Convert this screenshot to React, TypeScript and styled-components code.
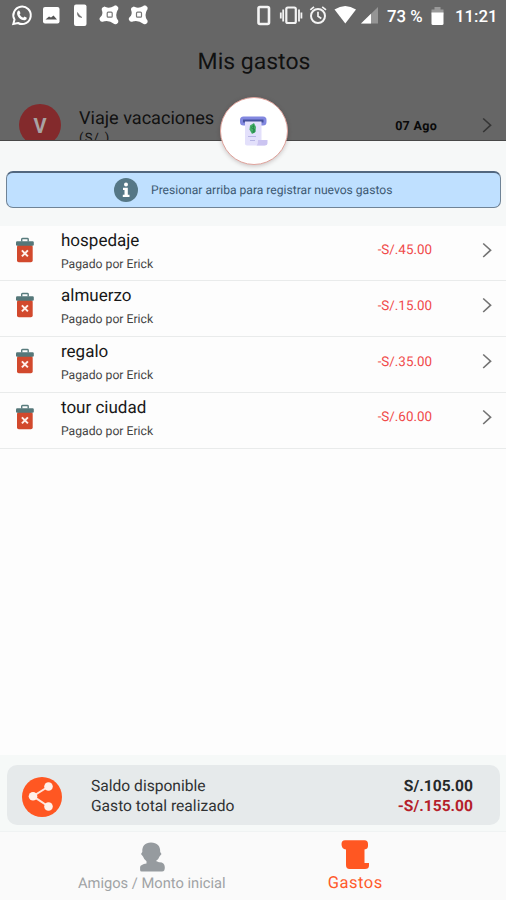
import React from "react";
import styled, { createGlobalStyle } from "styled-components";

const GlobalStyle = createGlobalStyle`
  * { box-sizing: border-box; }
  body { margin: 0; background: #fdfdfd; font-family: Roboto, "Liberation Sans", sans-serif; }
`;

const Screen = styled.div`
  width: 506px;
  height: 900px;
  position: relative;
  display: flex;
  flex-direction: column;
  overflow: hidden;
  background: #fdfdfd;
`;

const Text = styled.span<{ $size: number; $color?: string; $weight?: number; $spacing?: number; $line?: number }>`
  display: block;
  white-space: nowrap;
  font-size: ${(p) => p.$size}px;
  line-height: ${(p) => p.$line ?? 20}px;
  color: ${(p) => p.$color ?? "#222"};
  font-weight: ${(p) => p.$weight ?? 400};
  letter-spacing: ${(p) => p.$spacing ?? 0}px;
  text-rendering: geometricPrecision;
`;

const Header = styled.header`
  height: 141px;
  flex: none;
  overflow: hidden;
  background: #666;
  border-bottom: 1px solid #484848;
`;

const StatusBar = styled.div`
  height: 32px;
  display: flex;
  justify-content: space-between;
`;

const StatusIcons = styled.svg`
  display: block;
  flex: none;
`;

const StatusRight = styled.div`
  display: flex;
  align-items: center;
  padding-right: 9px;
`;

const BatteryLevel = styled(Text)`
  width: 44px;
  margin-left: 7px;
  padding-top: 1px;
`;

const Clock = styled(Text)`
  width: 42px;
  margin-left: 11px;
  padding-top: 1px;
`;

const Title = styled.h1`
  margin: 0;
  height: 58px;
  text-align: center;
  font-size: 23px;
  font-weight: 400;
  line-height: 59px;
  padding-left: 2px;
  color: #111;
  text-rendering: geometricPrecision;
`;

const Trip = styled.div`
  display: flex;
  height: 70px;
  padding: 14px 13px 0 19px;
`;

const Avatar = styled.div`
  width: 42px;
  height: 42px;
  border-radius: 50%;
  background: #832a2c;
  color: #a9a3a3;
  font-size: 20px;
  font-weight: 700;
  line-height: 44px;
  text-align: center;
`;

const TripBody = styled.div`
  flex: 1;
  padding: 5px 0 0 18px;
`;

const TripDate = styled(Text)`
  margin: 13px 44px 0 0;
`;

const TripArrow = styled.div`
  margin-top: 12px;
`;

const Chevron = styled.svg`
  display: block;
  width: 12px;
  height: 18px;
`;

const Fab = styled.button`
  position: absolute;
  left: 220px;
  top: 97px;
  width: 68px;
  height: 68px;
  padding: 0;
  border: 1px solid #e0a39c;
  border-radius: 50%;
  background: #fff;
  box-shadow: 0 1px 4px rgba(60, 30, 30, 0.25);
`;

const FabIcon = styled.svg`
  display: block;
`;

const BannerArea = styled.section`
  height: 84.5px;
  flex: none;
  padding: 30px 5px 0 6px;
  background: #f6f8f8;
`;

const Banner = styled.div`
  height: 37px;
  display: flex;
  align-items: center;
  padding-left: 107px;
  gap: 13px;
  border: 1px solid #6f8396;
  border-top: 2px solid #52677f;
  border-radius: 7px;
  background: #bfe0ff;
`;

const List = styled.ul`
  margin: 0;
  padding: 0;
  list-style: none;
  flex: 1;
`;

const Row = styled.li`
  height: 55.75px;
  display: flex;
  padding: 0 13px 0 15px;
  border-bottom: 1px solid #e9ebeb;
`;

const TrashIcon = styled.svg`
  display: block;
  width: 20px;
  height: 26px;
  margin-top: 11px;
`;

const RowBody = styled.div`
  flex: 1;
  padding: 5px 0 0 26px;
`;

const RowAmount = styled(Text)`
  margin: 15.5px 49px 0 0;
`;

const RowArrow = styled.div`
  margin-top: 15px;
`;

const SummaryArea = styled.section`
  flex: none;
  height: 77px;
  padding: 10px 6px 0 7px;
  background: #f6f9f8;
  border-bottom: 1px solid #f0f3f3;
`;

const Summary = styled.div`
  height: 60px;
  display: flex;
  padding: 0 27px 0 15px;
  align-items: center;
  border-radius: 10px;
  background: #e6eaeb;
`;

const ShareIcon = styled.svg`
  display: block;
  margin-top: 3px;
`;

const SummaryLabels = styled.div`
  flex: 1;
  padding: 2px 0 0 29px;
`;

const SummaryValues = styled.div`
  padding-top: 2px;
  text-align: right;
`;

const TabBar = styled.nav`
  flex: none;
  height: 68px;
  display: grid;
  grid-template-columns: 1fr 1fr;
  padding: 0 49px 0 50px;
  background: #fafafa;
`;

const Tab = styled.div`
  display: flex;
  flex-direction: column;
  align-items: center;
  padding-top: 7px;
`;

const TabIcon = styled.svg`
  display: block;
  width: 32px;
  height: 34px;
`;

const Arrow = ({ color }: { color: string }) => (
  <Chevron viewBox="0 0 12 18" fill="none" stroke={color} strokeWidth="1.6">
    <path d="M2.2 2.5 9.6 9.2 2.2 16" />
  </Chevron>
);

const Fan = ({ x }: { x: number }) => (
  <g transform={`translate(${x} 15)`}>
    <path d="M-5-5.5Q0-3 6-6.700M-5-5.500Q-3 0-7.200 4M-7.200 4Q0 2 6 6.500M6-6.700Q2 0 6 6.500" fill="none" stroke="#fff" strokeWidth="5.400" strokeLinecap="round" strokeLinejoin="round" />
    <rect x="-4" y="-4" width="8" height="8" fill="#fff" />
    <rect x="-2.3" y="-2.8" width="5" height="5" rx="1" fill="none" stroke="#777" strokeWidth="1.2" />
  </g>
);

const NotificationIcons = () => (
  <StatusIcons width="160" height="32" viewBox="0 0 160 32">
    <path d="M13.300 24 14.500 19.600A8.700 8.700 0 1 1 18 23Z" fill="none" stroke="#fff" strokeWidth="2" />
    <path
      d="M17.500 11.500C18.300 10 19.300 10.200 19.700 11.200L20.500 13.200 19.600 14.500Q20.800 16.800 23.200 17.700L24.500 16.500 26.800 17.700Q27 19.600 25 20.300C20.500 21 15.500 15 17.500 11.500Z"
      fill="#fff"
    />
    <rect x="43" y="7" width="16.500" height="16.500" rx="2" fill="#fff" />
    <path d="M45.500 19.500 49 16.500 51 17.500 53.500 15.500 57 19.500Z" fill="#555" />
    <rect x="74" y="4.500" width="12.500" height="21.500" rx="2" fill="#fff" />
    <path d="M77.500 12.500v2q.5 3 4.500 3-3-2-4.500-5Z" stroke="#777" strokeWidth=".6" fill="#666" />
    <Fan x={109.5} />
    <Fan x={138.8} />
  </StatusIcons>
);

const SystemIcons = () => (
  <StatusIcons width="124" height="32" viewBox="256 0 124 32">
    <g fill="none" stroke="#f4f4f4">
      <rect x="258.500" y="7" width="10.500" height="17" rx="1.500" strokeWidth="2.600" />
      <rect x="286.300" y="7.500" width="9.500" height="15.500" rx="1.500" strokeWidth="2.200" />
      <path d="M283.200 9.500v12M299 9.500v12M280.800 12.500v6M301.400 12.500v6" strokeWidth="1.800" />
      <circle cx="318" cy="16" r="7" strokeWidth="2" />
      <path d="M318 11.800V16.300L321.300 18.500M310.300 9.800 314 6.800M322.200 6.800 326 9.800" strokeWidth="1.700" />
    </g>
    <path d="M334.500 9.500Q345.200 2.500 356 9.500L345.300 23.500Z" fill="#fff" />
    <path d="M378 7V23.500H361Z" fill="#959595" />
    <path d="M371 13.800V23.500H361Z" fill="#fff" />
  </StatusIcons>
);

const BatteryIcon = () => (
  <StatusIcons width="13" height="19" viewBox="0 0.5 13 19">
    <path d="M.5 3h3V.5h6V3h3v5H.5Z" fill="#999" />
    <path d="M.5 6h12v11q0 1.500-1.500 1.500H2Q.5 18.500.5 17Z" fill="#fff" />
  </StatusIcons>
);

const ReceiptIcon = () => (
  <FabIcon width="66" height="66" viewBox="221 98 66 66">
    <rect x="240" y="116.500" width="26.500" height="9" rx="3.500" fill="#8288e0" />
    <path d="M243 119.500h20.500v3h-20.500Z" fill="#45509a" />
    <path d="M245 121.500h16.500v18.500h5.500v3.500q0 2-2.500 2H247q-2.500 0-2-3Z" fill="#e3e0fb" />
    <path d="M258 140h9.500v3q0 2.500-3 2.500h-8q1.500-1 1.500-5.500Z" fill="#cbc4f1" />
    <path d="M254 123 256 127 255.500 132 252 134 249.500 129.500 250 125.500Z" fill="#45ae67" />
    <path d="M254.500 126.500q-3-1-3 .8t1.700 1.300 1.500 2.500-3 .2M253.500 124.500v8" fill="none" stroke="#24884a" strokeWidth=".8" />
    <path d="M248 136.500h8M250 140.500h5" stroke="#b7b5e5" />
  </FabIcon>
);

const InfoIcon = () => (
  <StatusIcons width="24" height="24" viewBox="0 0 24 24">
    <circle cx="12" cy="12" r="12" fill="#557786" />
    <circle cx="12" cy="6.400" r="2" fill="#fff" />
    <path d="M9 9.800h4.800v7h1.700V19H8.800v-2.200h1.700V12H9Z" fill="#fff" />
  </StatusIcons>
);

const Trash = () => (
  <TrashIcon viewBox="0 0 20 26">
    <path d="M6.700 4.500V2.200Q6.700 1.500 7.500 1.500h4.800q.9 0 .9.700v2.300" fill="none" stroke="#587b7d" strokeWidth="1.400" />
    <rect x="2" y="8" width="15.700" height="17.200" rx="1.800" fill="#d2492d" />
    <rect x="1" y="4.300" width="17.800" height="4.400" rx="1.200" fill="#557779" />
    <path d="m6.900 13.400 6 6m0-6-6 6" stroke="#fff0eb" strokeWidth="2" />
  </TrashIcon>
);

const expenses = [
  { name: "hospedaje", amount: "-S/.45.00" },
  { name: "almuerzo", amount: "-S/.15.00" },
  { name: "regalo", amount: "-S/.35.00" },
  { name: "tour ciudad", amount: "-S/.60.00" },
];

export default function App() {
  return (
    <>
      <GlobalStyle />
      <Screen>
        <Header>
          <StatusBar>
            <NotificationIcons />
            <StatusRight>
              <SystemIcons />
              <BatteryLevel $size={16.8} $weight={500} $color="#fff">73 %</BatteryLevel>
              <BatteryIcon />
              <Clock $size={16.8} $weight={500} $color="#fff">11:21</Clock>
            </StatusRight>
          </StatusBar>
          <Title>Mis gastos</Title>
          <Trip>
            <Avatar>V</Avatar>
            <TripBody>
              <Text $size={18.1} $color="#111">Viaje vacaciones</Text>
              <Text $size={13} $color="#111" $spacing={1.2} $line={20}>(S/.)</Text>
            </TripBody>
            <TripDate $size={12.5} $weight={700} $color="#090909" $spacing={0.3}>07 Ago</TripDate>
            <TripArrow><Arrow color="#353535" /></TripArrow>
          </Trip>
        </Header>

        <BannerArea>
          <Banner>
            <InfoIcon />
            <Text $size={12.1} $color="#3d5972">Presionar arriba para registrar nuevos gastos</Text>
          </Banner>
        </BannerArea>

        <List>
          {expenses.map((e) => (
            <Row key={e.name}>
              <Trash />
              <RowBody>
                <Text $size={17} $color="#171717">{e.name}</Text>
                <Text $size={12.2} $color="#444" $line={27}>Pagado por Erick</Text>
              </RowBody>
              <RowAmount $size={13.4} $color="#f04a4a">{e.amount}</RowAmount>
              <RowArrow><Arrow color="#737373" /></RowArrow>
            </Row>
          ))}
        </List>

        <SummaryArea>
          <Summary>
            <ShareIcon width="40" height="40" viewBox="0 0 40 40">
              <circle cx="20" cy="20" r="20" fill="#ff5722" />
              <path d="M26.500 9.500 11 19.200 26.500 29.500" fill="none" stroke="#ffe3da" strokeWidth="2" />
              <g fill="#fff0ea">
                <circle cx="26.500" cy="9.500" r="4.300" />
                <circle cx="11" cy="19.200" r="4.300" />
                <circle cx="26.500" cy="29.500" r="4.300" />
              </g>
            </ShareIcon>
            <SummaryLabels>
              <Text $size={15.6} $color="#303233" $line={20.5}>Saldo disponible</Text>
              <Text $size={15.6} $color="#303233" $line={20.5}>Gasto total realizado</Text>
            </SummaryLabels>
            <SummaryValues>
              <Text $size={15.6} $weight={700} $color="#26292a" $line={20.5}>S/.105.00</Text>
              <Text $size={15.6} $weight={700} $color="#b51f2b" $line={20.5}>-S/.155.00</Text>
            </SummaryValues>
          </Summary>
        </SummaryArea>

        <TabBar>
          <Tab>
            <TabIcon viewBox="1.5 0 32 34">
              <path
                d="M16.500 3.500C10.500 3.500 7.500 7 7.800 13L6.500 15 8.500 17.500Q9.500 20.500 12 22.300V24.500Q6 25.500 5.600 28V31Q5.600 32.500 7.200 32.500H27.500Q30.500 32.500 30.300 28Q30 23 24.500 23.300L21.500 22Q24 20.500 25 17.500L27 15 25.700 13C26 7 22.500 3.500 16.500 3.500Z"
                fill="#969b9f"
              />
            </TabIcon>
            <Text $size={14.7} $color="#a0a3a5" $line={21}>Amigos / Monto inicial</Text>
          </Tab>
          <Tab>
            <TabIcon viewBox="0 0 32 34">
              <path
                d="M6 1.200H25.500Q29 1.200 29 5V7Q29 10 25.500 10.500V24H30V26.500Q30 30 26 30H10.500Q7 30 7 26V10.500Q2.500 10 2.500 5Q2.500 1.200 6 1.200Z"
                fill="#ff5722"
              />
            </TabIcon>
            <Text $size={16.5} $color="#ff5a2a" $spacing={0.5} $line={22}>Gastos</Text>
          </Tab>
        </TabBar>

        <Fab aria-label="Registrar gasto">
          <ReceiptIcon />
        </Fab>
      </Screen>
    </>
  );
}
